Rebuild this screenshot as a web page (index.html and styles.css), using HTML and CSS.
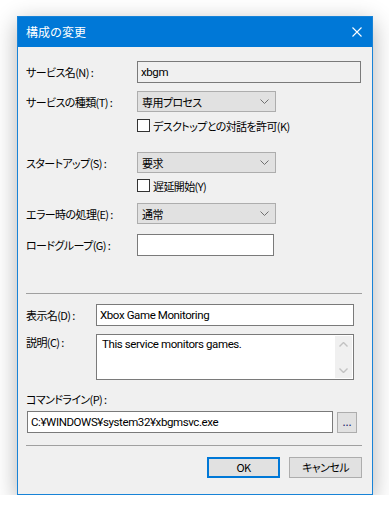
FILE: index.html
```html
<!DOCTYPE html>
<html lang="ja">
<head>
    <meta charset="UTF-8">
    <meta name="viewport" content="width=device-width, initial-scale=1.0">
    <title>構成の変更</title>
    <link rel="stylesheet" href="styles.css">
</head>
<body>
    <div class="dialog">
        <div class="titlebar">
            <span class="title">構成の変更</span>
            <svg class="close" width="10" height="10" viewBox="0 0 10 10">
                <path d="M0.5 0.5 L9.5 9.5 M9.5 0.5 L0.5 9.5" stroke="#fff" stroke-width="1.1" fill="none"/>
            </svg>
        </div>
        <div class="content">
            <div class="row row-name">
                <span class="label">サービス名(N) :</span>
                <div class="field readonly wide">xbgm</div>
            </div>
            <div class="row row-type">
                <span class="label">サービスの種類(T) :</span>
                <div class="combo">専用プロセス<svg class="chevron" width="9" height="5" viewBox="0 0 9 5"><path d="M0.5 0.5 L4.5 4.5 L8.5 0.5" stroke="#707070" fill="none"/></svg></div>
            </div>
            <div class="check row-desktop">
                <span class="box"></span><span>デスクトップとの対話を許可(K)</span>
            </div>
            <div class="row row-start">
                <span class="label">スタートアップ(S) :</span>
                <div class="combo">要求<svg class="chevron" width="9" height="5" viewBox="0 0 9 5"><path d="M0.5 0.5 L4.5 4.5 L8.5 0.5" stroke="#707070" fill="none"/></svg></div>
            </div>
            <div class="check row-delay">
                <span class="box"></span><span>遅延開始(Y)</span>
            </div>
            <div class="row row-error">
                <span class="label">エラー時の処理(E) :</span>
                <div class="combo">通常<svg class="chevron" width="9" height="5" viewBox="0 0 9 5"><path d="M0.5 0.5 L4.5 4.5 L8.5 0.5" stroke="#707070" fill="none"/></svg></div>
            </div>
            <div class="row row-group">
                <span class="label">ロードグループ(G) :</span>
                <div class="field narrow"></div>
            </div>

            <div class="separator sep-top"></div>

            <div class="row row-display">
                <span class="label short">表示名(D) :</span>
                <div class="field long">Xbox Game Monitoring</div>
            </div>
            <div class="row row-desc">
                <span class="label short">説明(C) :</span>
                <div class="memo">
                    <span class="memo-text">This service monitors games.</span>
                    <div class="scrollbar">
                        <svg width="9" height="5" viewBox="0 0 9 5"><path d="M0.5 4.5 L4.5 0.5 L8.5 4.5" stroke="#c2c2c2" stroke-width="1.4" fill="none"/></svg>
                        <svg width="9" height="5" viewBox="0 0 9 5"><path d="M0.5 0.5 L4.5 4.5 L8.5 0.5" stroke="#c2c2c2" stroke-width="1.4" fill="none"/></svg>
                    </div>
                </div>
            </div>
            <div class="cmd-label">コマンドライン(P) :</div>
            <div class="row row-cmd">
                <div class="field cmd">C:¥WINDOWS¥system32¥xbgmsvc.exe</div>
                <div class="browse">...</div>
            </div>

            <div class="separator sep-bottom"></div>

            <div class="buttons">
                <div class="button default">OK</div>
                <div class="button">キャンセル</div>
            </div>
        </div>
    </div>
</body>
</html>
```

FILE: styles.css
```css
body {
    margin: 0;
    padding: 0;
    background-color: #ffffff;
    font-family: "Noto Sans CJK JP", sans-serif;
    font-size: 11px;
    letter-spacing: -0.6px;
    color: #000;
    font-feature-settings: "palt";
}

.dialog {
    width: 354px;
    height: 477px;
    margin: 16px 0 0 17px;
    border: 1px solid #1883d7;
    background-color: #f0f0f0;
    box-shadow: 0 6px 22px rgba(0, 0, 0, 0.3);
    display: flex;
    flex-direction: column;
}

.titlebar {
    height: 30px;
    background-color: #0078d7;
    display: flex;
    align-items: center;
    justify-content: space-between;
    padding: 0 10px 0 8px;
    color: #fff;
}

.title {
    font-size: 12px;
    letter-spacing: 0;
    font-feature-settings: normal;
    margin-top: -1px;
}

.close {
    display: block;
    margin-top: -1px;
}

.content {
    padding: 0 10px 0 8px;
    display: flex;
    flex-direction: column;
}

.row {
    display: flex;
    align-items: center;
}

.label {
    width: 111px;
    flex-shrink: 0;
    white-space: nowrap;
}

.label.short {
    width: 70px;
}

/* latin values in edit boxes */
.field, .memo-text {
    font-family: "Roboto", "Noto Sans CJK JP", sans-serif;
    font-size: 11.5px;
    letter-spacing: -0.4px;
}

.field {
    height: 20px;
    border: 1px solid #7a7a7a;
    background-color: #fff;
    box-sizing: content-box;
    padding: 0 3px;
    line-height: 20px;
    white-space: nowrap;
}

.field.readonly {
    background-color: #f0f0f0;
}

.field.wide {
    width: 216px;
}

.field.narrow {
    width: 129px;
}

.field.long {
    width: 250px;
}

.field.cmd {
    width: 298px;
    margin-left: 1px;
}

.combo {
    width: 129px;
    height: 19px;
    padding: 0 4px;
    border: 1px solid #adadad;
    background-color: #e1e1e1;
    display: flex;
    align-items: center;
    justify-content: space-between;
}

.chevron {
    margin-right: 2px;
}

.check {
    display: flex;
    align-items: center;
    height: 13px;
    margin-left: 111px;
    gap: 3px;
}

.box {
    width: 11px;
    height: 11px;
    border: 1px solid #333;
    background-color: #fff;
}

.row-name { margin-top: 14px; }
.row-type { margin-top: 8px; }
.row-desktop { margin-top: 7px; }
.row-start { margin-top: 20px; }
.row-delay { margin-top: 6px; }
.row-error { margin-top: 11px; }
.row-group { margin-top: 10px; }

.separator {
    height: 1px;
    background-color: #a0a0a0;
}

.sep-top { margin-top: 37px; }

.row-display { margin-top: 10px; }

.row-desc {
    margin-top: 8px;
    align-items: flex-start;
}

.memo {
    width: 256px;
    height: 44px;
    border: 1px solid #7a7a7a;
    background-color: #fff;
    display: flex;
    justify-content: space-between;
}

.memo-text {
    padding: 2px 0 0 5px;
}

.scrollbar {
    width: 17px;
    margin: 1px 1px 1px 0;
    background-color: #f0f0f0;
    display: flex;
    flex-direction: column;
    justify-content: space-between;
    align-items: center;
    padding: 6px 0 5px;
}

.scrollbar svg {
    display: block;
}

.cmd-label {
    margin-top: 12px;
    height: 14px;
    line-height: 14px;
}

.row-cmd {
    margin-top: 5px;
    gap: 4px;
}

.browse {
    width: 18px;
    height: 19px;
    border: 1px solid #adadad;
    background-color: #e1e1e1;
    text-align: center;
    line-height: 17px;
    letter-spacing: 0;
    color: #1a1a6e;
}

.sep-bottom { margin-top: 12px; }

.buttons {
    margin-top: 11px;
    display: flex;
    justify-content: flex-end;
    gap: 9px;
}

.button {
    width: 71px;
    height: 19px;
    border: 1px solid #adadad;
    background-color: #e1e1e1;
    text-align: center;
    line-height: 19px;
}

.button.default {
    width: 69px;
    height: 17px;
    border: 2px solid #0078d7;
    line-height: 17px;
}
```
